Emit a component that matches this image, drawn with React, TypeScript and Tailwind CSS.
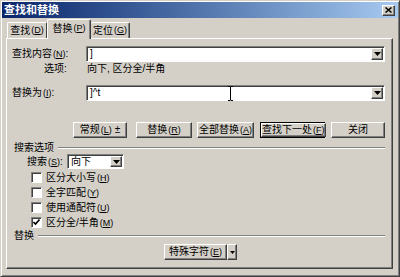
import type { ReactNode } from 'react';

const raised =
  'bg-[#d4d0c8] border border-t-white border-l-white border-r-[#404040] border-b-[#404040] shadow-[inset_-1px_-1px_0_#808080]';
const sunken =
  'bg-white border border-t-[#808080] border-l-[#808080] border-r-white border-b-white shadow-[inset_1px_1px_0_#404040]';

function Key({ k }: { k: string }) {
  return (
    <span className="text-[9px] ml-[1px]">
      (<span className="underline">{k}</span>)
    </span>
  );
}

function Arrow() {
  return (
    <svg width="7" height="4" viewBox="0 0 7 4">
      <path d="M0 0h7L3.5 4z" fill="#000" />
    </svg>
  );
}

function DropBtn({ w = 'w-[12px]' }: { w?: string }) {
  return (
    <div className={`${raised} ${w} h-full flex items-center justify-center shrink-0`}>
      <Arrow />
    </div>
  );
}

function Combo({ value, width, cursor }: { value: string; width: string; cursor?: boolean }) {
  return (
    <div className={`${sunken} ${width} h-[16px] flex items-stretch p-[1px] relative`}>
      <div className="flex-1 pl-[2px] flex items-center text-[10px] leading-none">{value}</div>
      <DropBtn />
      {cursor && (
        <svg className="absolute left-[140px] top-[0px]" width="7" height="15" viewBox="0 0 7 15">
          <path d="M1 0.5h2l0.5 0.5 0.5-0.5h2M3.5 1v13M1 14.5h2l0.5-0.5 0.5 0.5h2" stroke="#000" fill="none" />
        </svg>
      )}
    </div>
  );
}

function Btn({ children, width, isDefault }: { children: ReactNode; width: string; isDefault?: boolean }) {
  if (isDefault) {
    return (
      <div className={`${width} h-[16px] border border-black flex`}>
        <div className={`${raised} flex-1 flex items-center justify-center text-[10px] leading-none`}>{children}</div>
      </div>
    );
  }
  return (
    <div className={`${raised} ${width} h-[16px] flex items-center justify-center text-[10px] leading-none`}>
      {children}
    </div>
  );
}

function Check({ label, k, checked }: { label: string; k: string; checked?: boolean }) {
  return (
    <div className="h-[15px] flex items-center pl-[24px]">
      <div className={`${sunken} w-[11px] h-[11px] flex items-center justify-center`}>
        {checked && (
          <svg width="7" height="7" viewBox="0 0 7 7">
            <path d="M0.5 3l2 2 4-4.5" stroke="#000" strokeWidth="1.6" fill="none" />
          </svg>
        )}
      </div>
      <span className="ml-[4px] text-[10px] leading-none">
        {label}
        <Key k={k} />
      </span>
    </div>
  );
}

function Group({ title }: { title: string }) {
  return (
    <div className="h-[12px] flex items-center pl-[7px] pr-[7px]">
      <span className="text-[10px] leading-none mr-[4px]">{title}</span>
      <div className="flex-1 h-[2px] border-t border-t-[#808080] border-b border-b-white" />
    </div>
  );
}

export default function App() {
  return (
    <div className="w-[400px] h-[277px] bg-[#d4d0c8] border border-t-[#d4d0c8] border-l-[#d4d0c8] border-r-[#404040] border-b-[#404040] shadow-[inset_1px_1px_0_white,inset_-1px_-1px_0_#808080] p-[1px] font-['Liberation_Sans','Noto_Sans_CJK_SC',sans-serif] text-black overflow-hidden whitespace-nowrap">
      {/* title bar */}
      <div className="h-[16px] bg-gradient-to-r from-[#0a246a] to-[#a6caf0] flex items-center pl-[2px] pr-[3px]">
        <span className="text-white font-bold text-[11px] leading-none flex-1">查找和替换</span>
        <div className={`${raised} w-[13px] h-[11px] flex items-center justify-center`}>
          <svg width="7" height="6" viewBox="0 0 7 6">
            <path d="M0.5 0.5l6 5M6.5 0.5l-6 5" stroke="#000" strokeWidth="1.5" />
          </svg>
        </div>
      </div>

      <div className="pl-[4px] pt-[1px]">
        {/* tabs */}
        <div className="h-[19px] flex items-end pl-[1px] relative z-10">
          <div className="w-[40px] h-[16px] border-t border-l border-t-white border-l-white border-r border-r-[#404040] rounded-t-[2px] flex items-center justify-center text-[10px] leading-none">
            查找<Key k="D" />
          </div>
          <div className="w-[44px] h-[20px] -mb-px bg-[#d4d0c8] border-t border-l border-t-white border-l-white border-r border-r-[#404040] shadow-[inset_-1px_0_0_#808080] rounded-t-[2px] flex items-start pt-[4px] justify-center text-[10px] leading-none">
            替换<Key k="P" />
          </div>
          <div className="w-[39px] h-[16px] border-t border-r border-t-white border-r-[#404040] shadow-[inset_-1px_0_0_#808080] rounded-t-[2px] flex items-center justify-center text-[10px] leading-none">
            定位<Key k="G" />
          </div>
        </div>

        {/* panel */}
        <div className="w-[387px] h-[231px] border border-t-white border-l-white border-r-[#404040] border-b-[#404040] shadow-[inset_-1px_-1px_0_#808080] flex flex-col">
          <div className="mt-[7px] h-[16px] flex items-center pl-[5px]">
            <span className="w-[74px] text-[10px] leading-none">
              查找内容<Key k="N" />:
            </span>
            <Combo value="]" width="w-[299px]" />
          </div>
          <div className="mt-[1px] h-[12px] flex items-center pl-[37px] text-[10px] leading-none">
            <span className="w-[43px]">选项:</span>
            <span>向下, 区分全/半角</span>
          </div>
          <div className="mt-[10px] h-[16px] flex items-center pl-[5px]">
            <span className="w-[74px] text-[10px] leading-none">
              替换为<Key k="I" />:
            </span>
            <Combo value="]^t" width="w-[299px]" cursor />
          </div>

          {/* buttons */}
          <div className="mt-[21px] flex items-center pl-[66px]">
            <Btn width="w-[54px]">
              常规<Key k="L" />&nbsp;±
            </Btn>
            <div className="w-[9px]" />
            <Btn width="w-[56px]">
              替换<Key k="R" />
            </Btn>
            <div className="w-[5px]" />
            <Btn width="w-[57px]">
              全部替换<Key k="A" />
            </Btn>
            <div className="w-[6px]" />
            <Btn width="w-[65px]" isDefault>
              查找下一处<Key k="F" />
            </Btn>
            <div className="w-[6px]" />
            <Btn width="w-[54px]">关闭</Btn>
          </div>

          <div className="mt-[4px]">
            <Group title="搜索选项" />
          </div>
          <div className="h-[15px] flex items-center pl-[20px]">
            <span className="w-[40px] text-[10px] leading-none">
              搜索<Key k="S" />:
            </span>
            <div className={`${sunken} w-[57px] h-[15px] flex items-stretch p-[1px]`}>
              <div className="flex-1 pl-[2px] flex items-center text-[10px] leading-none">向下</div>
              <DropBtn w="w-[12px]" />
            </div>
          </div>
          <div className="mt-[1px]">
            <Check label="区分大小写" k="H" />
            <Check label="全字匹配" k="Y" />
            <Check label="使用通配符" k="U" />
            <Check label="区分全/半角" k="M" checked />
          </div>
          <Group title="替换" />
          <div className="mt-[2px] pl-[157px] flex">
            <div className={`${raised} w-[63px] h-[16px] flex items-center justify-center text-[10px] leading-none`}>
              特殊字符<Key k="E" />
            </div>
            <div className={`${raised} w-[10px] h-[16px] flex items-center justify-center`}>
              <svg width="5" height="3" viewBox="0 0 5 3">
                <path d="M0 0h5L2.5 3z" fill="#000" />
              </svg>
            </div>
          </div>
        </div>
      </div>
    </div>
  );
}
